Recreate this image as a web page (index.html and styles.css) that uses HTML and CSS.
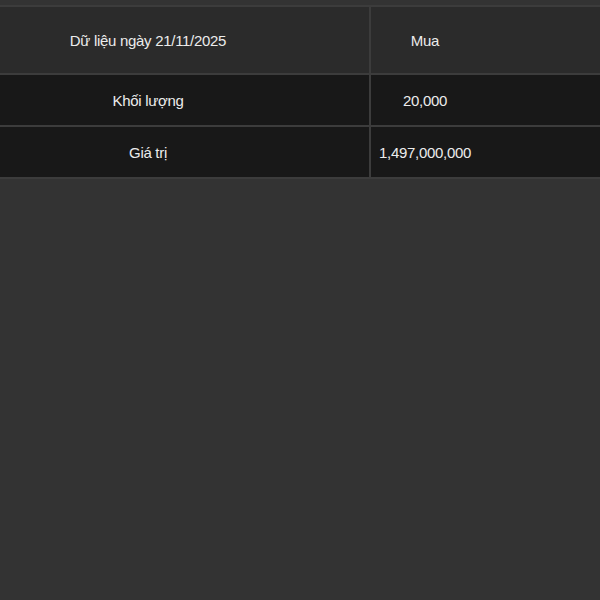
FILE: index.html
```html
<!doctype html>
<html lang="vi">
   <head>
      <meta charset="UTF-8" />
      <meta name="viewport" content="width=device-width, initial-scale=1.0" />
      <title>Dữ liệu giao dịch</title>
      <link rel="stylesheet" href="styles.css">
   </head>
   <body>
      <table class="trade">
         <thead>
            <tr>
               <th class="label">Dữ liệu ngày 21/11/2025</th>
               <th class="value">Mua</th>
            </tr>
         </thead>
         <tbody>
            <tr>
               <td class="label">Khối lượng</td>
               <td class="value">20,000</td>
            </tr>
            <tr>
               <td class="label">Giá trị</td>
               <td class="value">1,497,000,000</td>
            </tr>
         </tbody>
      </table>
   </body>
</html>
```

FILE: styles.css
```css
* {
   margin: 0;
   padding: 0;
   box-sizing: border-box;
}
body {
   background: #333333;
   padding-top: 5px;
   font-family: "Liberation Sans", Arial, sans-serif;
   color: #ececec;
}
.trade {
   width: 100%;
   border-collapse: collapse;
   table-layout: fixed;
   border-top: 2px solid #3c3c3c;
}
.trade th,
.trade td {
   font-size: 15px;
   font-weight: normal;
   letter-spacing: -0.3px;
   text-align: center;
   border: 2px solid #3c3c3c;
}
.trade th {
   background: #2b2b2b;
   height: 68px;
}
.trade td {
   background: #181818;
   height: 52px;
}
.label {
   width: 370px;
   padding-right: 73px;
   border-left: none !important;
}
.value {
   padding-right: 121px;
   border-right: none !important;
}
```
